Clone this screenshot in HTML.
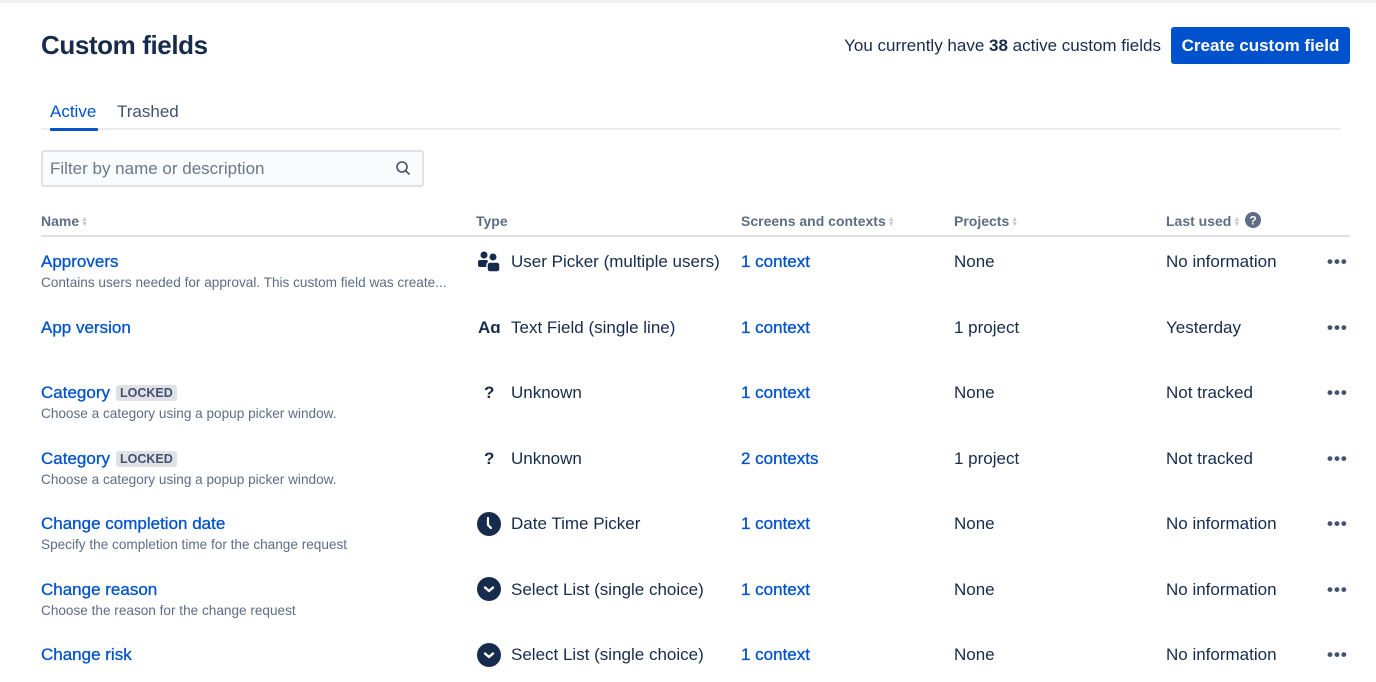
<!DOCTYPE html>
<html><head><meta charset="utf-8"><style>
*{margin:0;padding:0;box-sizing:border-box}
body{width:1376px;height:682px;overflow:hidden;background:#fff;font-family:"Liberation Sans",sans-serif;color:#172b4d;position:relative}
.a{position:absolute;white-space:nowrap}
.topbar{position:absolute;left:0;top:0;width:1376px;height:3px;background:#f0f1f3}
h1{position:absolute;left:41px;top:30px;font-size:26px;font-weight:bold;color:#172b4d;letter-spacing:-0.4px}
.cnt{right:215px;top:36px;font-size:17px}
.btn{left:1171px;top:27px;width:179px;height:37px;background:#0052cc;color:#fff;border-radius:3px;font-size:17px;font-weight:bold;text-align:center;line-height:37px}
.tab{font-size:17px;top:102px}
.search{left:41px;top:150px;width:383px;height:37px;border:2px solid #dfe1e6;background:#fafbfc;border-radius:3px}
.th{top:213px;font-size:14px;font-weight:bold;color:#5e6c84}
.sort{display:inline-block;width:6px;margin-left:2px;vertical-align:middle;color:#c1c7d0;font-size:7px;line-height:5px}
.name{font-size:17px;color:#0052cc;-webkit-text-stroke:0.3px #0052cc}
.desc{font-size:13.6px;color:#5e6c84}
.t{font-size:17px}
.lnk{font-size:17px;color:#0052cc;-webkit-text-stroke:0.3px #0052cc}
.lock{display:inline-block;background:#dfe1e6;color:#42526e;font-size:12.5px;font-weight:bold;padding:1px 4px;border-radius:3px;margin-left:6px;vertical-align:1px;-webkit-text-stroke:0}
.dots{font-size:17px;letter-spacing:1px;font-weight:bold;color:#42526e}
</style></head><body>
<div class="topbar"></div>
<h1>Custom fields</h1>
<div class="a cnt">You currently have <b>38</b> active custom fields</div>
<div class="a btn">Create custom field</div>
<div class="a tab" style="left:50px;color:#0052cc">Active</div>
<div class="a tab" style="left:117px;color:#42526e">Trashed</div>
<div class="a" style="left:41px;top:128px;width:1300px;height:2px;background:#ebecf0"></div>
<div class="a" style="left:50px;top:128px;width:48px;height:3px;background:#0052cc;border-radius:1px"></div>
<div class="a search"></div>
<div class="a" style="left:50px;top:159px;font-size:17px;color:#6b778c">Filter by name or description</div>
<svg class="a" style="left:395px;top:160px" width="16" height="16" viewBox="0 0 16 16"><circle cx="7" cy="7" r="5" fill="none" stroke="#42526e" stroke-width="1.6"/><path d="M10.5 10.5L14 14" stroke="#42526e" stroke-width="1.6" stroke-linecap="round"/></svg>
<div class="a th" style="left:41px">Name<span class="sort">▲<br>▼</span></div>
<div class="a th" style="left:476px">Type</div>
<div class="a th" style="left:741px">Screens and contexts<span class="sort">▲<br>▼</span></div>
<div class="a th" style="left:954px">Projects<span class="sort">▲<br>▼</span></div>
<div class="a th" style="left:1166px">Last used<span class="sort">▲<br>▼</span></div>
<svg class="a" style="left:1245px;top:212px" width="16" height="16" viewBox="0 0 16 16"><circle cx="8" cy="8" r="8" fill="#5e6c84"/><text x="8" y="12.5" font-size="12" font-weight="bold" fill="#fff" text-anchor="middle" font-family="Liberation Sans">?</text></svg>
<div class="a" style="left:41px;top:235px;width:1309px;height:2px;background:#dfe1e6"></div>

<div class="a name" style="left:41px;top:252px">Approvers</div>
<div class="a desc" style="left:41px;top:275px">Contains users needed for approval. This custom field was create...</div>
<svg class="a" style="left:478px;top:251px" width="23" height="21" viewBox="0 0 23 21"><circle cx="6" cy="4" r="3.5" fill="#172b4d"/><circle cx="15" cy="6" r="3.5" fill="#172b4d"/><rect x="0" y="9" width="10" height="7" rx="2" fill="#172b4d"/><rect x="9" y="11" width="13" height="10" rx="3" fill="#172b4d" stroke="#fff" stroke-width="1.5"/></svg>
<div class="a t" style="left:511px;top:252px">User Picker (multiple users)</div>
<div class="a lnk" style="left:741px;top:252px">1 context</div>
<div class="a t" style="left:954px;top:252px">None</div>
<div class="a t" style="left:1166px;top:252px">No information</div>
<div class="a dots" style="left:1327px;top:252px">•••</div>

<div class="a name" style="left:41px;top:318px">App version</div>
<div class="a t" style="left:478px;top:318px;font-weight:bold">Aɑ</div>
<div class="a t" style="left:511px;top:318px">Text Field (single line)</div>
<div class="a lnk" style="left:741px;top:318px">1 context</div>
<div class="a t" style="left:954px;top:318px">1 project</div>
<div class="a t" style="left:1166px;top:318px">Yesterday</div>
<div class="a dots" style="left:1327px;top:318px">•••</div>

<div class="a name" style="left:41px;top:383px">Category<span class="lock">LOCKED</span></div>
<div class="a desc" style="left:41px;top:406px">Choose a category using a popup picker window.</div>
<div class="a t" style="left:484px;top:383px;font-weight:bold">?</div>
<div class="a t" style="left:511px;top:383px">Unknown</div>
<div class="a lnk" style="left:741px;top:383px">1 context</div>
<div class="a t" style="left:954px;top:383px">None</div>
<div class="a t" style="left:1166px;top:383px">Not tracked</div>
<div class="a dots" style="left:1327px;top:383px">•••</div>

<div class="a name" style="left:41px;top:449px">Category<span class="lock">LOCKED</span></div>
<div class="a desc" style="left:41px;top:472px">Choose a category using a popup picker window.</div>
<div class="a t" style="left:484px;top:449px;font-weight:bold">?</div>
<div class="a t" style="left:511px;top:449px">Unknown</div>
<div class="a lnk" style="left:741px;top:449px">2 contexts</div>
<div class="a t" style="left:954px;top:449px">1 project</div>
<div class="a t" style="left:1166px;top:449px">Not tracked</div>
<div class="a dots" style="left:1327px;top:449px">•••</div>

<div class="a name" style="left:41px;top:514px">Change completion date</div>
<div class="a desc" style="left:41px;top:537px">Specify the completion time for the change request</div>
<svg class="a" style="left:477px;top:512px" width="24" height="24" viewBox="0 0 24 24"><circle cx="12" cy="12" r="12" fill="#172b4d"/><path d="M11 6v7l3 3" fill="none" stroke="#fff" stroke-width="2.2" stroke-linecap="round"/></svg>
<div class="a t" style="left:511px;top:514px">Date Time Picker</div>
<div class="a lnk" style="left:741px;top:514px">1 context</div>
<div class="a t" style="left:954px;top:514px">None</div>
<div class="a t" style="left:1166px;top:514px">No information</div>
<div class="a dots" style="left:1327px;top:514px">•••</div>

<div class="a name" style="left:41px;top:580px">Change reason</div>
<div class="a desc" style="left:41px;top:603px">Choose the reason for the change request</div>
<svg class="a" style="left:477px;top:577px" width="24" height="24" viewBox="0 0 24 24"><circle cx="12" cy="12" r="12" fill="#172b4d"/><path d="M8 10.5l4 3.5 4-3.5" fill="none" stroke="#fff" stroke-width="2.4" stroke-linecap="round" stroke-linejoin="round"/></svg>
<div class="a t" style="left:511px;top:580px">Select List (single choice)</div>
<div class="a lnk" style="left:741px;top:580px">1 context</div>
<div class="a t" style="left:954px;top:580px">None</div>
<div class="a t" style="left:1166px;top:580px">No information</div>
<div class="a dots" style="left:1327px;top:580px">•••</div>

<div class="a name" style="left:41px;top:645px">Change risk</div>
<svg class="a" style="left:477px;top:643px" width="24" height="24" viewBox="0 0 24 24"><circle cx="12" cy="12" r="12" fill="#172b4d"/><path d="M8 10.5l4 3.5 4-3.5" fill="none" stroke="#fff" stroke-width="2.4" stroke-linecap="round" stroke-linejoin="round"/></svg>
<div class="a t" style="left:511px;top:645px">Select List (single choice)</div>
<div class="a lnk" style="left:741px;top:645px">1 context</div>
<div class="a t" style="left:954px;top:645px">None</div>
<div class="a t" style="left:1166px;top:645px">No information</div>
<div class="a dots" style="left:1327px;top:645px">•••</div>
</body></html>
